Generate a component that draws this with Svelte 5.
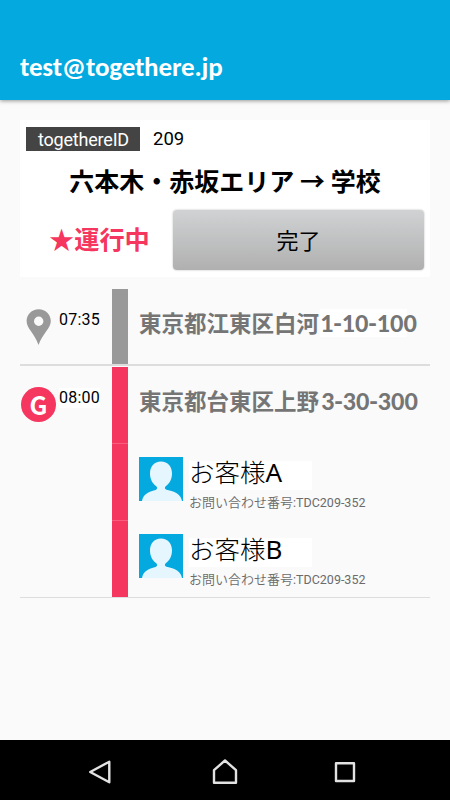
<script lang="ts">
  type Passenger = { name: string; code: string; inquiry: string }
  type Stop = {
    time: string
    town: string
    block: string
    goal: boolean
    passengers: Passenger[]
  }

  const account = 'test@togethere.jp'

  const stops: Stop[] = [
    { time: '07:35', town: '東京都江東区白河', block: '1-10-100', goal: false, passengers: [] },
    {
      time: '08:00',
      town: '東京都台東区上野',
      block: '3-30-300',
      goal: true,
      passengers: [
        { name: 'お客様', code: 'A', inquiry: 'TDC209-352' },
        { name: 'お客様', code: 'B', inquiry: 'TDC209-352' },
      ],
    },
  ]
</script>

<div class="screen">
  <header class="appbar">
    <h1>{account}</h1>
  </header>

  <main>
    <section class="card">
      <div class="ident">
        <span class="chip">togethereID</span>
        <span class="number">209</span>
      </div>
      <h2>六本木・赤坂エリア → 学校</h2>
      <div class="status-row">
        <span class="status">★運行中</span>
        <button type="button">完了</button>
      </div>
    </section>

    <ol class="timeline">
      {#each stops as stop}
        <li class="stop" class:goal={stop.goal}>
          <div class="when">
            {#if stop.goal}
              <span class="badge">G</span>
            {:else}
              <svg class="pin" width="26" height="36" viewBox="0 0 26 36" aria-hidden="true">
                <path fill-rule="evenodd" d="M12.7 0.2C5.8 0.2 0.6 5.4 0.6 12c0 3.8 2 6.8 4.2 10.1C7.8 26.5 10.5 30.5 12.5 36c2-5.5 4.9-9.5 7.9-13.9C22.7 18.8 24.8 15.8 24.8 12 24.8 5.4 19.6 0.2 12.7 0.2zM12.7 7.5a4.7 4.7 0 1 1 0 9.4a4.7 4.7 0 0 1 0-9.4z"/>
              </svg>
            {/if}
            <time>{stop.time}</time>
          </div>
          <div class="bar">
            <span></span>
            {#each stop.passengers as _}<span></span>{/each}
          </div>
          <div class="details">
            <div class="address">{stop.town}<span class="block">{stop.block}</span></div>
            {#each stop.passengers as p}
              <div class="passenger">
                <svg width="44" height="44" viewBox="0 0 44 44" aria-hidden="true">
                  <rect width="44" height="44" fill="#03a9df"/>
                  <path fill="#e6f6fe" d="M22 4.5C15 4.5 11 9.5 11 16.5C11 22 13.5 26.5 17 29C18.6 30.5 18.5 32 16.5 33C9.5 34.5 4 37.5 3 44H43C42 37.500 36 34.500 27.500 32.800C25.500 32 25.400 30.500 27 29C30.500 26.500 33 22 33 16.500C33 9.500 29 4.500 22 4.500z"/>
                </svg>
                <div class="who">
                  <div class="name">{p.name}<span>{p.code}</span></div>
                  <div class="inquiry">お問い合わせ番号<span>:{p.inquiry}</span></div>
                </div>
              </div>
            {/each}
          </div>
        </li>
      {/each}
    </ol>
  </main>

  <nav>
    <svg width="24" height="26" viewBox="0 0 24 26" aria-hidden="true">
      <path d="M21.3 2.7V23.3L2.2 13z"/>
    </svg>
    <svg class="home" width="26" height="26" viewBox="0 0 26 26" aria-hidden="true">
      <path d="M2 11.2L13 1.5L24 11.2V23.8H2z"/>
    </svg>
    <svg width="22" height="22" viewBox="0 0 22 22" aria-hidden="true">
      <path d="M2 2.2H20V20H2z"/>
    </svg>
  </nav>
</div>

<style>
  :global(body) { margin: 0; }

  .screen {
    display: flex;
    flex-direction: column;
    width: 450px;
    height: 800px;
    overflow: hidden;
    background: #fafafa;
    color: #000;
    font-family: Roboto, "Noto Sans CJK JP", sans-serif;
  }

  .appbar {
    flex: none;
    height: 100px;
    box-sizing: border-box;
    padding: 50px 20px 0;
    background: #03a9df;
    box-shadow: 0 1px 4px rgba(0, 0, 0, 0.4);
  }

  h1 {
    margin: 0;
    color: #fff;
    font: 700 27px/33px Carlito, Lato, sans-serif;
    letter-spacing: -0.15px;
    white-space: nowrap;
  }

  main { flex: 1; padding: 20px 20px 0; }

  .card {
    height: 157px;
    box-sizing: border-box;
    padding: 7px 6px;
    background: #fff;
  }

  .ident { display: flex; height: 24px; line-height: 25px; font-size: 18px; }

  .chip {
    width: 114px;
    box-sizing: border-box;
    padding-left: 1px;
    margin-right: 13px;
    background: #444;
    color: #fff;
    text-align: center;
    letter-spacing: -0.2px;
  }

  .number { font-size: 18.5px; }

  h2 {
    margin: 10px 0 0;
    height: 41px;
    font: 700 25px/38px "Noto Sans CJK JP", sans-serif;
    text-align: center;
    white-space: nowrap;
  }

  .status-row { display: flex; align-items: center; margin-top: 8px; height: 60px; }

  .status {
    width: 147px;
    height: 40px;
    box-sizing: border-box;
    padding-left: 23px;
    color: #f5365f;
    font: 700 25.2px/36px "Noto Sans CJK JP", sans-serif;
  }

  button {
    width: 251px;
    height: 60px;
    border: 0;
    border-radius: 4px;
    padding: 0 0 2px;
    background: linear-gradient(#d0d2d3, #b0b0b0);
    box-shadow: 0 0 2px rgba(0, 0, 0, 0.3);
    color: #000;
    font: 400 22px/32px "Noto Sans CJK JP", sans-serif;
  }

  .timeline { margin: 12px 0 0; padding: 0; list-style: none; }

  .stop { display: flex; height: 75px; border-bottom: 2px solid #ddd; }
  .goal { height: 230px; padding-top: 1px; border-bottom-width: 1px; }

  .when { display: flex; width: 92px; }
  .pin { margin: 20px 7px 0 6px; fill: #999; }

  .badge {
    width: 35px;
    height: 35px;
    margin: 20px 3px 0 1px;
    border-radius: 50%;
    background: #f5365f;
    color: #fff;
    font: 700 25px/35px "Noto Sans CJK JP", sans-serif;
    text-align: center;
  }

  time { height: 20px; margin-top: 21px; font-size: 16px; line-height: 20px; letter-spacing: 0.2px; }
  .goal time { background: #fff; }

  .bar { display: flex; flex-direction: column; width: 16px; }
  .bar span { flex: 1; background: #999; }
  .goal .bar span { background: #f5365f; }
  .goal .bar span + span { border-top: 1px solid #f85c7f; }

  .details { flex: 1; padding-left: 11px; white-space: nowrap; }

  .address {
    height: 77px;
    box-sizing: border-box;
    padding-top: 19px;
    color: #757575;
    font: 700 22.5px/28px "Noto Sans CJK JP", sans-serif;
  }

  .block {
    display: inline-block;
    width: 87px;
    height: 28px;
    margin: 1px 0 0 1px;
    background: #fff;
    font: 700 26.5px/28px Carlito, Lato, sans-serif;
    vertical-align: top;
  }

  .goal .block { margin-left: 2px; background: none; }

  .passenger { display: flex; height: 77.5px; padding-top: 12.5px; box-sizing: border-box; }
  .passenger svg { flex: none; }
  .who { margin-left: 6px; }

  .name {
    width: 123px;
    height: 29px;
    margin-top: 4px;
    background: #fff;
    font: 300 25.5px/20px "Noto Sans CJK JP", sans-serif;
  }

  .name span { font: 400 26px/20px "Noto Sans", sans-serif; }

  .inquiry {
    margin-top: 3px;
    color: #6b6b6b;
    font: 350 13px/18px "Noto Sans CJK JP", sans-serif;
  }

  .inquiry span { font-family: Roboto, sans-serif; font-weight: 400; font-size: 12.5px; }

  nav {
    flex: none;
    display: flex;
    align-items: center;
    justify-content: space-between;
    height: 60px;
    box-sizing: border-box;
    padding: 4px 94px 0 88px;
    background: #000;
  }

  .home { margin-left: 4px; }

  nav path { fill: none; stroke: #e2e2e2; stroke-width: 2.4; stroke-linejoin: round; }
</style>
